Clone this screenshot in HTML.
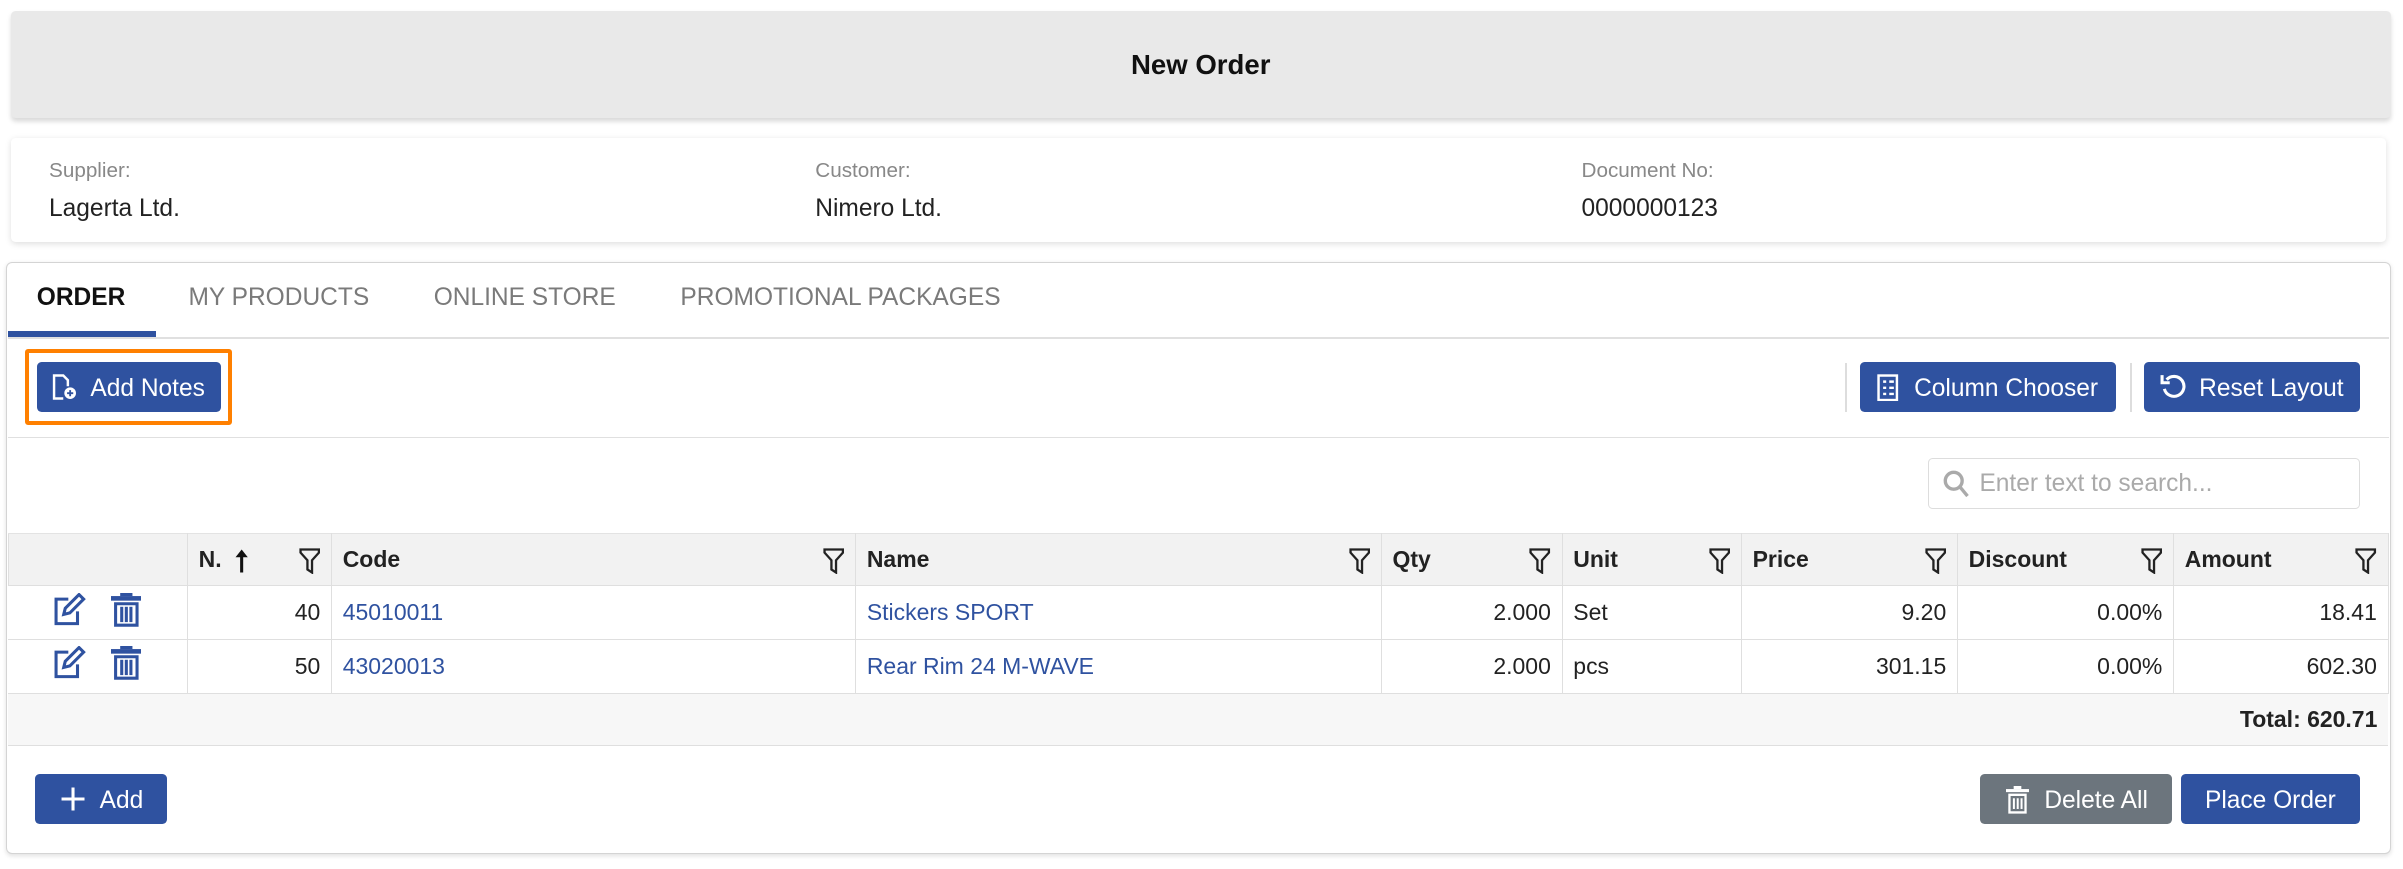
<!DOCTYPE html>
<html><head><meta charset="utf-8"><style>
html,body{margin:0;padding:0;background:#fff;overflow:hidden}
body{width:2403px;height:869px}
#w{zoom:1.5325;position:relative;width:1568px;height:567px;font-family:"Liberation Sans",Arial,sans-serif;color:#222}
.a{position:absolute}
.hdr{left:7px;top:7px;width:1553px;height:70px;background:#e9e9e9;border-radius:3px;box-shadow:0 2px 3px rgba(0,0,0,.15);text-align:center;line-height:70px;font-weight:bold;font-size:18px;color:#111}
.info{left:7px;top:90px;width:1550px;height:68px;background:#fff;border-radius:3px;box-shadow:0 1px 4px rgba(0,0,0,.13)}
.lbl{font-size:13.5px;color:#888;top:14px}
.val{font-size:16px;color:#222;top:37px}
.main{left:4px;top:171px;width:1555px;height:385px;border:1px solid #d4d4d4;border-radius:4px;box-shadow:0 1px 3px rgba(0,0,0,.12);background:#fff}
.tab{top:185px;font-size:16px;color:#7a7a7a}
.btn{background:#2f52a0;color:#fff;border-radius:3px;font-size:16px;height:33px;line-height:35px;top:236px;box-sizing:border-box}
.line{background:#e0e0e0;height:1px}
table{border-collapse:collapse;position:absolute;left:5px;top:348px;width:1553px;font-size:15px;table-layout:fixed}
td,th{border:1px solid #dfdfdf;height:34px;padding:0 7px;white-space:nowrap;overflow:hidden;box-sizing:border-box}
th{background:#f2f2f2;text-align:left;font-weight:bold;position:relative;border-top:1px solid #e3e3e3}
th svg.f{position:absolute;right:7px;top:9px}
td.r{text-align:right}
td.l{color:#2f52a0}
tr.tot td{background:#f7f7f7;font-weight:bold;text-align:right}
</style></head><body><div id="w">
<div class="a hdr">New Order</div>
<div class="a info">
<div class="a lbl" style="left:25px">Supplier:</div><div class="a val" style="left:25px">Lagerta Ltd.</div>
<div class="a lbl" style="left:525px">Customer:</div><div class="a val" style="left:525px">Nimero Ltd.</div>
<div class="a lbl" style="left:1025px">Document No:</div><div class="a val" style="left:1025px">0000000123</div>
</div>
<div class="a main"></div>
<div class="a tab" style="left:24px;color:#111;font-weight:bold">ORDER</div>
<div class="a tab" style="left:123px">MY PRODUCTS</div>
<div class="a tab" style="left:283px">ONLINE STORE</div>
<div class="a tab" style="left:444px">PROMOTIONAL PACKAGES</div>
<div class="a" style="left:5px;top:216px;width:97px;height:4px;background:#2f52a0"></div>
<div class="a line" style="left:5px;top:220px;width:1554px"></div>
<div class="a" style="left:16px;top:228px;width:130px;height:44px;border:3px solid #ff8000;border-radius:2px"></div>
<div class="a btn" style="left:24px;width:120px;padding-left:35px">Add Notes
<svg class="a" style="left:9px;top:8px" width="18" height="18" viewBox="0 0 18 18" fill="none" stroke="#fff" stroke-width="1.6"><path d="M8 16H2V1h6l3 3v4"/><circle cx="12.5" cy="12.5" r="3.8" fill="#fff" stroke="none"/><path d="M12.5 10.5v4M10.5 12.5h4" stroke="#2f52a0" stroke-width="1.2"/></svg></div>
<div class="a" style="left:1204px;top:237px;width:1px;height:32px;background:#ddd"></div>
<div class="a" style="left:1390px;top:237px;width:1px;height:32px;background:#ddd"></div>
<div class="a btn" style="left:1214px;width:167px;padding-left:35px">Column Chooser
<svg class="a" style="left:11px;top:8px" width="14" height="18" viewBox="0 0 14 18" fill="none" stroke="#fff" stroke-width="1.6"><rect x="1" y="1" width="12" height="16"/><path d="M4 5h2M8 5h3M4 9h2M8 9h3M4 13h2M8 13h3"/></svg></div>
<div class="a btn" style="left:1399px;width:141px;padding-left:36px">Reset Layout
<svg class="a" style="left:10px;top:7px" width="19" height="19" viewBox="0 0 19 19" fill="none" stroke="#fff" stroke-width="2"><path d="M5 5A6.5 6.5 0 1 1 3.5 11"/><path d="M2 2v5h5" stroke-width="2"/></svg></div>
<div class="a line" style="left:5px;top:285px;width:1554px"></div>
<div class="a" style="left:1258px;top:299px;width:282px;height:33px;border:1px solid #ddd;border-radius:3px;box-sizing:border-box;font-size:16px;color:#aaa;line-height:33px;padding-left:33px">Enter text to search...
<svg class="a" style="left:9px;top:7px" width="18" height="19" viewBox="0 0 18 19" fill="none" stroke="#aaa" stroke-width="2.2"><circle cx="7" cy="7" r="5.5"/><path d="M11 11l5 6"/></svg></div>
<table>
<colgroup><col style="width:117px"><col style="width:94px"><col style="width:342px"><col style="width:343px"><col style="width:118px"><col style="width:117px"><col style="width:141px"><col style="width:141px"><col style="width:140px"></colgroup>
<tr>
<th></th>
<th>N. <svg style="position:absolute;left:30px;top:9px" width="10" height="16" viewBox="0 0 10 16"><path d="M5 1L1 6h3v10h2V6h3z" fill="#111"/></svg><svg class="f" width="14" height="17" viewBox="0 0 14 17"><path d="M1 1h12v2L8.5 8v8L5.5 14V8L1 3z" fill="none" stroke="#222" stroke-width="1.5"/></svg></th>
<th>Code<svg class="f" width="14" height="17" viewBox="0 0 14 17"><path d="M1 1h12v2L8.5 8v8L5.5 14V8L1 3z" fill="none" stroke="#222" stroke-width="1.5"/></svg></th>
<th>Name<svg class="f" width="14" height="17" viewBox="0 0 14 17"><path d="M1 1h12v2L8.5 8v8L5.5 14V8L1 3z" fill="none" stroke="#222" stroke-width="1.5"/></svg></th>
<th>Qty<svg class="f" width="14" height="17" viewBox="0 0 14 17"><path d="M1 1h12v2L8.5 8v8L5.5 14V8L1 3z" fill="none" stroke="#222" stroke-width="1.5"/></svg></th>
<th>Unit<svg class="f" width="14" height="17" viewBox="0 0 14 17"><path d="M1 1h12v2L8.5 8v8L5.5 14V8L1 3z" fill="none" stroke="#222" stroke-width="1.5"/></svg></th>
<th>Price<svg class="f" width="14" height="17" viewBox="0 0 14 17"><path d="M1 1h12v2L8.5 8v8L5.5 14V8L1 3z" fill="none" stroke="#222" stroke-width="1.5"/></svg></th>
<th>Discount<svg class="f" width="14" height="17" viewBox="0 0 14 17"><path d="M1 1h12v2L8.5 8v8L5.5 14V8L1 3z" fill="none" stroke="#222" stroke-width="1.5"/></svg></th>
<th>Amount<svg class="f" width="14" height="17" viewBox="0 0 14 17"><path d="M1 1h12v2L8.5 8v8L5.5 14V8L1 3z" fill="none" stroke="#222" stroke-width="1.5"/></svg></th>
</tr>
<tr style="height:35px"><td style="padding-left:29px;border-left:none"><svg width="22" height="22" viewBox="0 0 22 22" fill="none" stroke="#2f52a0" stroke-width="2"><path d="M10 4H2v16h14v-8"/><path d="M17 1l3 3-9 9-4 1 1-4z"/></svg><svg style="margin-left:16px" width="20" height="22" viewBox="0 0 20 22" fill="#2f52a0"><rect x="6" y="0" width="8" height="2"/><rect x="0" y="2" width="20" height="3"/><path d="M2 6h16v16H2zM4 8v12h12V8z" fill-rule="evenodd"/><rect x="6" y="9" width="2" height="10"/><rect x="9" y="9" width="2" height="10"/><rect x="12" y="9" width="2" height="10"/></svg></td><td class="r">40</td><td class="l">45010011</td><td class="l">Stickers SPORT</td><td class="r">2.000</td><td>Set</td><td class="r">9.20</td><td class="r">0.00%</td><td class="r">18.41</td></tr>
<tr style="height:35px"><td style="padding-left:29px;border-left:none"><svg width="22" height="22" viewBox="0 0 22 22" fill="none" stroke="#2f52a0" stroke-width="2"><path d="M10 4H2v16h14v-8"/><path d="M17 1l3 3-9 9-4 1 1-4z"/></svg><svg style="margin-left:16px" width="20" height="22" viewBox="0 0 20 22" fill="#2f52a0"><rect x="6" y="0" width="8" height="2"/><rect x="0" y="2" width="20" height="3"/><path d="M2 6h16v16H2zM4 8v12h12V8z" fill-rule="evenodd"/><rect x="6" y="9" width="2" height="10"/><rect x="9" y="9" width="2" height="10"/><rect x="12" y="9" width="2" height="10"/></svg></td><td class="r">50</td><td class="l">43020013</td><td class="l">Rear Rim 24 M-WAVE</td><td class="r">2.000</td><td>pcs</td><td class="r">301.15</td><td class="r">0.00%</td><td class="r">602.30</td></tr>
<tr class="tot"><td colspan="9" style="border-left:none;border-right:none">Total: 620.71</td></tr>
</table>
<div class="a btn" style="left:23px;top:505px;width:86px;padding-left:42px">Add
<svg class="a" style="left:16px;top:8px" width="17" height="17" viewBox="0 0 17 17" stroke="#fff" stroke-width="2"><path d="M8.5 1v15M1 8.5h15"/></svg></div>
<div class="a btn" style="left:1292px;top:505px;width:125px;padding-left:42px;background:#6c757d">Delete All
<svg class="a" style="left:17px;top:8px" width="15" height="18" viewBox="0 0 15 18" fill="#fff"><rect x="5" y="0" width="5" height="2"/><rect x="0" y="2" width="15" height="2"/><path d="M1.5 5h12v13h-12zM3 6.5v10h9v-10z" fill-rule="evenodd"/><rect x="4.5" y="8" width="1.3" height="7"/><rect x="7" y="8" width="1.3" height="7"/><rect x="9.5" y="8" width="1.3" height="7"/></svg></div>
<div class="a btn" style="left:1423px;top:505px;width:117px;text-align:center">Place Order</div>
</div></body></html>
